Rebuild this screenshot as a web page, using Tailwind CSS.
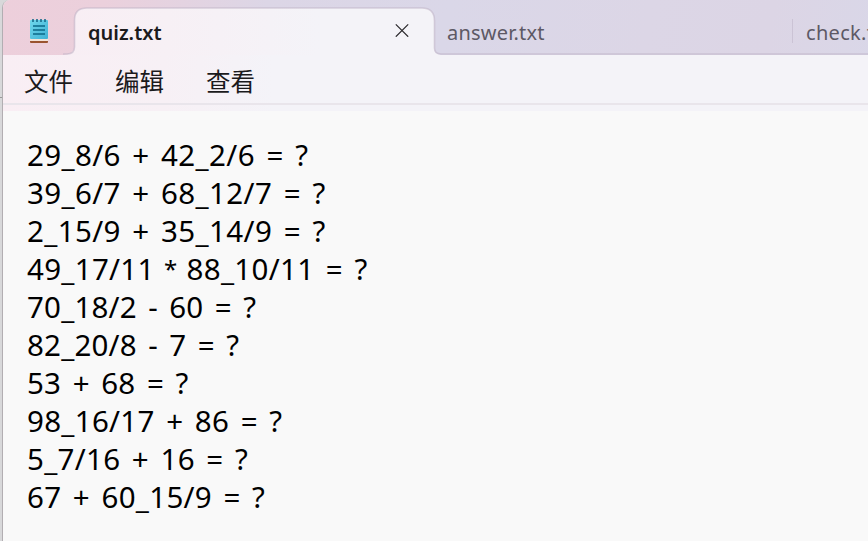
<!DOCTYPE html>
<html lang="zh-CN">
<head>
<meta charset="utf-8">
<title>quiz.txt</title>
<script src="https://cdn.jsdelivr.net/npm/@tailwindcss/browser@4"></script>
</head>
<body class="w-[868px] h-[541px] overflow-hidden bg-[#d8d8da]">
<div class="relative w-[880px] h-[560px] pl-[2px]">
  <div class="absolute left-0 top-[97px] w-[3px] h-px bg-[#999]"></div>
  <main class="relative h-full rounded-tl-[8px] border-l border-[#b2aeb2] bg-[#f9f9f9] overflow-hidden flex flex-col font-['Noto_Sans','Noto_Sans_CJK_SC',sans-serif]">
    <header class="relative h-[55px] shrink-0 flex bg-[linear-gradient(100deg,#edcfdb_0px,#ebd0dc_100px,#dcd6e6_260px,#dad7e8_440px,#dcd6e6_640px,#dcd5e5_760px,#d9d7e8_877px)]">
      <svg class="absolute left-0 top-0" width="877" height="55" viewBox="3 0 877 55" fill="none">
        <defs><linearGradient id="tab" gradientUnits="userSpaceOnUse" x1="65" y1="0" x2="320" y2="0"><stop stop-color="#f8eef4"/><stop offset=".4" stop-color="#f7f0f5"/><stop offset="1" stop-color="#f4f3f8"/></linearGradient></defs>
        <path d="M63 55Q74.500 54 74.500 47V20Q74.500 8 87 8H422Q434.500 8 434.500 21V49Q434.500 54 441 55Z" fill="url(#tab)"/>
        <path d="M63 54H67Q74.500 54 74.500 47V20Q74.500 8 87 8H422Q434.500 8 434.500 21V48Q434.500 54 441 54H880" stroke="#bdb0c4" stroke-opacity=".55" stroke-width="1.6"/>
      </svg>
      <div class="relative w-[72px] pl-[26px] pt-[18px]">
        <svg width="20" height="26" viewBox="0 0 20 26">
          <defs><linearGradient id="pad" x1="0" y1="0" x2="1" y2="1"><stop stop-color="#6fd8ec"/><stop offset="1" stop-color="#3fb0d4"/></linearGradient></defs>
          <path d="M1 20H19V24Q19 25 18 25H2Q1 25 1 24Z" fill="#9a5430"/>
          <path d="M1 20H19V23H1Z" fill="#f3e4d8"/>
          <rect x="1" y="2" width="18" height="19" rx="1" fill="url(#pad)"/>
          <path d="M4 1V4M8 1V4M12 1V4M16 1V4" stroke="#176b8b" stroke-width="1.600"/>
          <path d="M4 8H16M4 12H16M4 16H16" stroke="#0b6888" stroke-width="1.700"/>
        </svg>
      </div>
      <div class="relative w-[360px] flex justify-between pl-[13px] pr-[26px] pt-[19px] text-[#1b1a1c]">
        <span class="text-[20px] leading-[28px] font-semibold">quiz.txt</span>
        <svg class="mt-[4px]" width="14" height="14" viewBox="0 0 14 14" fill="none" stroke="#29272b" stroke-width="1.200"><path d="M.8 1.300L13.200 13.700M13.200 1.300L.8 13.700"/></svg>
      </div>
      <div class="relative w-[358px] pl-[12px] pt-[19px] text-[20px] leading-[28px] tracking-[0.2px] text-[#5d5965]">answer.txt<i class="absolute right-0 top-[19px] w-px h-[24px] bg-[#cbc3d5]"></i></div>
      <div class="relative w-[87px] pl-[13px] pt-[19px] text-[20px] leading-[28px] tracking-[0.3px] text-[#5d5965]">check.txt</div>
    </header>
    <nav class="h-[56px] shrink-0 flex flex-col bg-[linear-gradient(90deg,#f9eef4_0px,#f7f0f5_160px,#f4f3f8_270px)]">
      <div class="h-[48px] flex gap-[42px] pl-[21px] pt-[8px] text-[24.5px] leading-[36px] text-[#1b1a1c] font-['Noto_Sans_CJK_SC',sans-serif]"><span>文件</span><span>编辑</span><span>查看</span></div>
      <div class="h-[2px] bg-[#e9e5eb]"></div>
    </nav>
    <section class="pl-[24px] pt-[25px] text-[29.5px] leading-[38px] text-black whitespace-nowrap [word-spacing:3.5px]">
      <div class="tracking-[0.37px]">29_8/6 + 42_2/6 = ?</div>
      <div class="tracking-[0.37px]">39_6/7 + 68_12/7 = ?</div>
      <div class="tracking-[0.37px]">2_15/9 + 35_14/9 = ?</div>
      <div class="tracking-[0.3px]">49_17/11<span class="[word-spacing:1.2px]"> <span class="text-[24px] leading-none align-[2px]">*</span> </span>88_10/11 = ?</div>
      <div class="tracking-[0.2px]">70_18/2 - 60 = ?</div>
      <div class="tracking-[0.2px]">82_20/8 - 7 = ?</div>
      <div class="tracking-[0.25px]">53 + 68 = ?</div>
      <div class="tracking-[0.3px]">98_16/17 + 86 = ?</div>
      <div class="tracking-[0.3px]">5_7/16 + 16 = ?</div>
      <div class="tracking-[0.3px]">67 + 60_15/9 = ?</div>
    </section>
  </main>
</div>
</body>
</html>
